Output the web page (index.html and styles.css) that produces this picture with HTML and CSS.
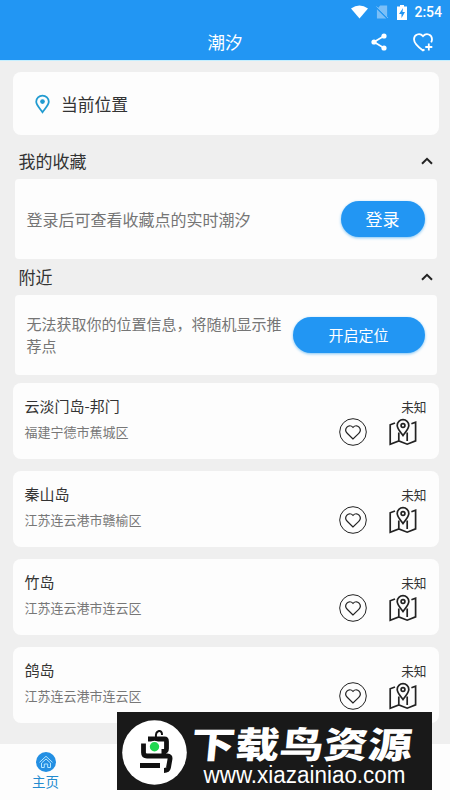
FILE: index.html
```
<!DOCTYPE html>
<html lang="zh-CN">
<head>
<meta charset="utf-8">
<title>潮汐</title>
<link rel="stylesheet" href="styles.css">
</head>
<body>
<svg class="defs" aria-hidden="true">
  <symbol id="heart" viewBox="0 0 28 28">
    <circle cx="14" cy="14" r="13.3" stroke-width="1"/>
    <path d="M14 21 8.200 15.300C4.300 11.300 9.500 4.800 14 9.300c4.500-4.500 9.700 2 5.800 6Z" stroke-width="1.200"/>
  </symbol>
  <symbol id="map" viewBox="0 0 28 28">
    <path d="M6 5 1.200 6.800V26.200l8.600-3.300 8.400 3.300 8.400-3.300V4.200l-4.200 1.600M9.800 14.500v8.400M18.200 14.500v8.500"/>
    <path d="M14 17.500C11 13.400 8.200 10.500 8.200 7.400a5.800 5.800 0 0 1 11.600 0c0 3.100-2.800 6-5.800 10.100Z"/>
    <circle cx="14" cy="7.600" r="1.900"/>
  </symbol>
</svg>
<header class="appbar">
  <div class="status">
    <svg class="wifi" viewBox="0 0 18 14"><path d="M0 3.400Q9-3 18 3.400L9 14Z"/></svg>
    <svg class="sim" viewBox="0 0 14 14"><path d="M4.500 0H12v12.500L2 3Z M1 4l10 10H1Z"/><path class="slash" d="m.5 1 12.500 12.500"/></svg>
    <svg class="battery" viewBox="0 0 10 15"><path d="M3 0h4v1.500h3V15H0V1.500h3Z"/><path class="bolt" d="M6 3 2 9h2.500v4L8 7H5.500Z"/></svg>
    <span>2:54</span>
  </div>
  <div class="titlebar">
    <h1>潮汐</h1>
    <svg class="share" viewBox="0 0 16 18"><path d="M13 3 3 9l10 6"/><circle cx="13" cy="3" r="2.600"/><circle cx="3" cy="9" r="2.600"/><circle cx="13" cy="15" r="2.600"/></svg>
    <svg class="favorite" viewBox="0 0 20 19"><path d="M11.500 16.500 10 17.500C6.500 15 1 10.800 1 6.300 1 1.500 6.700-.6 10 3.200 13.300-.6 19 1.500 19 6.300c0 1-.3 2-.8 3M15.800 10.500v7M12.300 14h7"/></svg>
  </div>
</header>
<main>
  <section class="card location">
    <svg viewBox="0 0 16 20"><path d="M8 18.700C4.500 14 1.300 10.800 1.300 7.600a6.700 6.500 0 0 1 13.400 0C14.700 10.800 11.500 14 8 18.700Z"/><circle cx="8" cy="7.400" r="2.500"/></svg>
    <span>当前位置</span>
  </section>
  <div class="section first"><h2>我的收藏</h2><svg viewBox="0 0 12 8"><path d="m1 6.800 5-5 5 5"/></svg></div>
  <section class="notice"><p>登录后可查看收藏点的实时潮汐</p><button class="login">登录</button></section>
  <div class="section"><h2>附近</h2><svg viewBox="0 0 12 8"><path d="m1 6.800 5-5 5 5"/></svg></div>
  <section class="notice nearby"><p>无法获取你的位置信息，将随机显示推荐点</p><button class="locate">开启定位</button></section>
  <div class="places">
    <article class="card place">
      <div class="info"><h3>云淡门岛-邦门</h3><p>福建宁德市蕉城区</p></div>
      <div class="side"><span>未知</span><div class="actions"><svg><use href="#heart"/></svg><svg class="map"><use href="#map"/></svg></div></div>
    </article>
    <article class="card place">
      <div class="info"><h3>秦山岛</h3><p>江苏连云港市赣榆区</p></div>
      <div class="side"><span>未知</span><div class="actions"><svg><use href="#heart"/></svg><svg class="map"><use href="#map"/></svg></div></div>
    </article>
    <article class="card place">
      <div class="info"><h3>竹岛</h3><p>江苏连云港市连云区</p></div>
      <div class="side"><span>未知</span><div class="actions"><svg><use href="#heart"/></svg><svg class="map"><use href="#map"/></svg></div></div>
    </article>
    <article class="card place">
      <div class="info"><h3>鸽岛</h3><p>江苏连云港市连云区</p></div>
      <div class="side"><span>未知</span><div class="actions"><svg><use href="#heart"/></svg><svg class="map"><use href="#map"/></svg></div></div>
    </article>
  </div>
</main>
<nav>
  <a class="tab">
    <svg viewBox="0 0 20 20"><circle cx="10" cy="10" r="10"/><path d="m3.500 10.300 6.500-6 6.500 6M5.500 11l4.500-4 4.500 4v4.500h-2.800V12H8.300v3.500H5.500Z"/></svg>
    <span>主页</span>
  </a>
</nav>
<aside class="banner">
  <svg viewBox="0 0 315 78">
    <circle cx="37.500" cy="40.500" r="32.300" fill="#fff"/>
    <g class="bird">
      <path d="M39 26c-1-8.500 6.500-9 6-3" stroke-width="2"/>
      <path d="M31 27h16.500q2 0 2 2.500v7q0 3-3 3h-2M26.500 31.500v9q0 3.500 3.500 3.500h20.500q3 0 2.500 3l-1.500 8.500q-.6 3-4.500 3M23 53.500h20" stroke-width="4.800"/>
    </g>
    <circle cx="37.500" cy="34.700" r="6" fill="#fff"/>
    <circle cx="37.500" cy="34.700" r="4.700" fill="#20d750"/>
    <text class="brand" transform="matrix(1 0 -.08 .82 73 46)" textLength="221">下载鸟资源</text>
    <text class="url" x="86.500" y="70.500" textLength="202" lengthAdjust="spacingAndGlyphs">www.xiazainiao.com</text>
  </svg>
</aside>
</body>
</html>
```
FILE: styles.css
```
* { box-sizing: border-box; }
body {
  margin: 0;
  width: 450px;
  height: 800px;
  overflow: hidden;
  position: relative;
  display: flex;
  flex-direction: column;
  background: #efefef;
  color: #333;
  font-family: "Noto Sans CJK SC", sans-serif;
}
h1, h2, h3, p { margin: 0; font-weight: 400; }
svg { display: block; flex: none; fill: none; }
.defs { position: absolute; width: 0; height: 0; }

.appbar {
  height: 61px;
  flex: none;
  background: #2296f3;
  border-bottom: 1px solid #c5efff;
  color: #fff;
}
.status {
  height: 24px;
  display: flex;
  justify-content: flex-end;
  align-items: center;
  padding: 0 8px 0 0;
  font: 500 14px/24px Roboto, sans-serif;
}
.status svg { fill: #fff; }
.wifi { width: 17px; height: 14px; margin-right: 8px; }
.sim { width: 13px; height: 14px; margin-right: 8px; }
.status .sim { fill: #7bbff7; }
.slash { stroke: #7bbff7; }
.battery { width: 10px; height: 15px; margin-right: 7px; }
.bolt { fill: #2296f3; }
.titlebar {
  height: 36px;
  display: grid;
  grid-template-columns: 1fr 16px 20px;
  column-gap: 26px;
  align-items: center;
  padding-right: 17px;
}
.titlebar h1 { font-size: 17.500px; line-height: 36px; padding-left: 207.500px; }
.share { width: 16px; height: 18px; stroke: #fff; stroke-width: 1.700; }
.share circle { fill: #fff; stroke: none; }
.favorite { width: 20px; height: 19px; stroke: #fff; stroke-width: 1.800; }

main { flex: 1; padding: 11px 11.500px 0 12.500px; }
.card { background: #fdfdfd; border-radius: 8px; }
.location {
  height: 63px;
  display: flex;
  align-items: center;
  gap: 11px;
  padding-left: 22.500px;
  font-size: 16.800px;
  line-height: 24px;
}
.location svg { width: 15px; height: 20px; stroke: #219bd0; stroke-width: 1.900; }
.location circle { fill: #219bd0; stroke: none; }
.section {
  height: 36px;
  display: flex;
  justify-content: space-between;
  align-items: center;
  padding: 0 6px 0 6px;
}
.section.first { height: 44px; padding-top: 8px; }
.section h2 { font-size: 17px; line-height: 24px; }
.section svg { width: 12px; height: 8px; stroke: #222; stroke-width: 2; }
.notice {
  height: 80px;
  margin: 0 2px;
  padding: 0 12px;
  display: flex;
  align-items: center;
  justify-content: space-between;
  border-radius: 4px;
  background: #fdfdfd;
  color: #757575;
  font-size: 16px;
}
.nearby { font-size: 15px; line-height: 22px; }
.nearby p { width: 256px; padding-bottom: 1px; }
button {
  height: 36px;
  flex: none;
  border: 0;
  padding: 0;
  border-radius: 18px;
  background: #2296f3;
  box-shadow: 0 1px 3px #7fc4f5;
  color: #fff;
  font: 400 17px/36px "Noto Sans CJK SC", sans-serif;
}
.login { width: 84px; }
.locate { width: 132px; font-size: 15px; }
.places { display: grid; gap: 12px; padding-top: 8px; }
.place {
  height: 76px;
  display: flex;
  justify-content: space-between;
  padding: 12px 12px 0 12px;
}
.info h3 { font-size: 15px; line-height: 22px; }
.info p { margin-top: 5px; color: #777; font-size: 13px; line-height: 20px; }
.side { display: flex; flex-direction: column; align-items: flex-end; font-size: 12.700px; line-height: 23px; }
.actions { display: flex; gap: 22px; padding-right: 10px; stroke: #222; }
.actions svg { width: 28px; height: 28px; }
.actions .map { stroke-width: 1.700; }

nav { height: 56px; flex: none; background: #fdfdfd; display: flex; }
.tab { width: 91px; display: flex; flex-direction: column; align-items: center; padding-top: 8px; color: #248bcf; font-size: 13.500px; line-height: 19px; }
.tab svg { width: 20px; height: 20px; }
.tab circle { fill: #238fe3; }
.tab path { stroke: #b5e6ff; stroke-width: 1; }

.banner { position: absolute; left: 117px; top: 712px; width: 315px; height: 78px; background: #191919; }
.bird { stroke: #111; stroke-linejoin: round; }
.brand { font-size: 44px; font-weight: 900; fill: #fff; }
.url { font: 23px "Liberation Sans", sans-serif; fill: #fff; }
```
